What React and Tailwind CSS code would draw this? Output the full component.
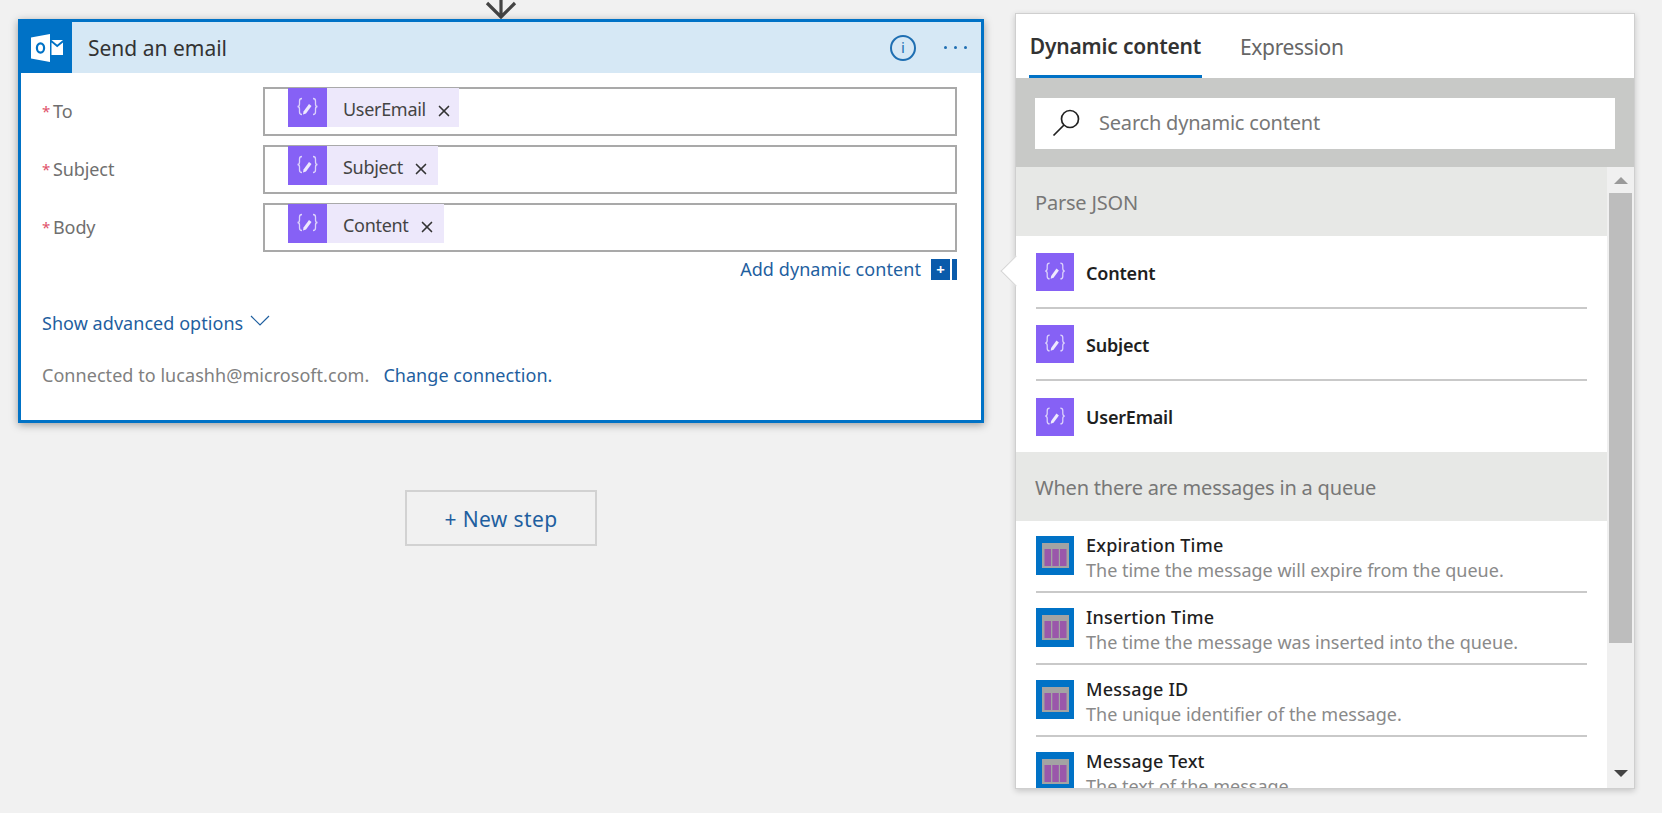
import { X } from "lucide-react";

const font = { fontFamily: '"Noto Sans", "Open Sans", sans-serif' };

function ExpressionIcon({ size = "w-[39px] h-[39px]" }) {
  return (
    <div className={`${size} shrink-0 bg-[#8661f5] flex items-center justify-center`}>
      <svg viewBox="0 0 39 39" className="w-full h-full" fill="none" stroke="#ddd3fb" strokeWidth="1.300">
        <path d="M14 10.500c-2 0-2.500 1-2.500 2.500v3c0 1.500-.7 2.500-2 2.500 1.300 0 2 1 2 2.500v3c0 1.500.5 2.500 2.500 2.500" />
        <path d="M25 10.500c2 0 2.500 1 2.500 2.500v3c0 1.500.7 2.500 2 2.500-1.300 0-2 1-2 2.500v3c0 1.500-.5 2.500-2.500 2.500" />
        <path d="M15.500 23.500l5.500-7.500 2.500 2-5.500 7.500-3 1z" fill="#eee9fd" stroke="none" />
      </svg>
    </div>
  );
}

function QueueIcon() {
  return (
    <svg viewBox="0 0 38 39" className="w-[38px] h-[39px] shrink-0">
      <rect width="38" height="39" fill="#0072c6" />
      <rect x="6" y="7" width="27" height="25" fill="#a3a3a3" />
      <rect x="8.500" y="13" width="6.500" height="17" fill="#9a57aa" />
      <rect x="16.300" y="13" width="6.500" height="17" fill="#9a57aa" />
      <rect x="24" y="13" width="6.500" height="17" fill="#9a57aa" />
    </svg>
  );
}

function OutlookLogo() {
  return (
    <svg viewBox="0 0 32 28" className="w-[32px] h-[28px]">
      <path d="M0 3.500 19 0v28L0 24.500z" fill="#fff" />
      <ellipse cx="9.500" cy="14" rx="3.600" ry="4.600" fill="none" stroke="#0072c6" strokeWidth="2.200" />
      <path d="M20.500 6H32l-5.800 4.800z" fill="#fff" />
      <path d="M20.500 8.500l5.700 4.700 5.800-4.700V21H20.500z" fill="#fff" />
    </svg>
  );
}

function TokenField({ label, token, chipWidth }) {
  return (
    <div className="flex items-start">
      <div className="w-[221px] h-[49px] flex items-center text-[18px] tracking-[-0.1px] text-[#6f6f6f]">
        <span className="text-[#e0516b] text-[15px] w-[11px] -mt-px">*</span>
        {label}
      </div>
      <div className="w-[694px] h-[49px] border-2 border-[#a9a9a9] pl-[23px] bg-white">
        <div className={`${chipWidth} h-[39px] -mt-px flex items-center bg-[#ede8fb]`}>
          <ExpressionIcon />
          <span className="ml-[16px] mt-[3px] text-[18px] tracking-[-0.3px] text-[#444]">{token}</span>
          <X className="w-[18px] h-[18px] ml-[9px] mt-[7px] text-[#333]" strokeWidth={2.2} />
        </div>
      </div>
    </div>
  );
}

function SimpleRow({ title, last }) {
  return (
    <div className={`mx-[20px] flex items-center ${last ? "h-[71px]" : "h-[72px] border-b-2 border-[#c9c9c9]"}`}>
      <ExpressionIcon size="w-[38px] h-[38px]" />
      <span className="ml-[12px] mt-[2px] text-[18px] font-semibold tracking-[-0.2px] text-[#1f1f1f]">{title}</span>
    </div>
  );
}

function QueueRow({ title, desc }) {
  return (
    <div className="mx-[20px] h-[72px] flex items-start pt-[15px] border-b-2 border-[#c9c9c9]">
      <QueueIcon />
      <div className="ml-[12px] -mt-[3px]">
        <div className="text-[18px] leading-[24px] font-medium tracking-[0.2px] text-[#1f1f1f]">{title}</div>
        <div className="mt-[1px] text-[18px] leading-[24px] tracking-[0px] text-[#8a8a8a] whitespace-nowrap">{desc}</div>
      </div>
    </div>
  );
}

function SectionHeader({ children }) {
  return (
    <div className="h-[69px] pl-[19px] pt-[2px] flex items-center bg-[#e7e8e6] text-[20px] tracking-[-0.2px] text-[#777]">
      {children}
    </div>
  );
}

export default function App() {
  return (
    <div style={font} className="h-[813px] overflow-hidden bg-[#f1f1f1] flex items-start pl-[18px]">
      {/* Flow designer column */}
      <div className="w-[966px] flex flex-col items-start">
        <div className="h-[19px] w-full overflow-hidden flex justify-center">
          <svg viewBox="0 0 32 19" className="w-[32px] h-[19px]" fill="none" stroke="#444" strokeWidth="3.200">
            <path d="M16 0v16M2 3l14 14L30 3" />
          </svg>
        </div>

        <div className="w-full h-[404px] border-[3px] border-[#0072c6] bg-white shadow-[0_2px_8px_rgba(0,0,0,0.35)]">
          <div className="h-[51px] flex items-center bg-[#d6e8f5]">
            <div className="w-[51px] h-[51px] bg-[#0072c6] flex items-center justify-center">
              <OutlookLogo />
            </div>
            <span className="ml-[16px] pt-[2px] text-[21px] text-[#333] flex-1">Send an email</span>
            <div className="w-[26px] h-[26px] rounded-full border-2 border-[#1f6fb2] flex items-center justify-center text-[15px] text-[#1f6fb2]">
              i
            </div>
            <div className="ml-[28px] mr-[14px] flex gap-[7px]">
              <span className="w-[3px] h-[3px] rounded-full bg-[#1f6fb2]"></span>
              <span className="w-[3px] h-[3px] rounded-full bg-[#1f6fb2]"></span>
              <span className="w-[3px] h-[3px] rounded-full bg-[#1f6fb2]"></span>
            </div>
          </div>

          <div className="pt-[14px] pl-[21px]">
            <div className="flex flex-col gap-[9px]">
              <TokenField label="To" token="UserEmail" chipWidth="w-[171px]" />
              <TokenField label="Subject" token="Subject" chipWidth="w-[150px]" />
              <TokenField label="Body" token="Content" chipWidth="w-[156px]" />
            </div>

            <div className="w-[915px] mt-[4px] flex items-center justify-end">
              <span className="text-[18px] tracking-[0.07px] text-[#1f5f9f]">Add dynamic content</span>
              <div className="ml-[10px] w-[19px] h-[21px] bg-[#0a5bab] flex items-center justify-center text-white text-[15px] font-bold leading-none">
                +
              </div>
              <div className="ml-[2px] w-[5px] h-[21px] bg-[#0a5bab]"></div>
            </div>

            <div className="mt-[27px] flex items-center text-[18px] tracking-[0.05px] text-[#1f5f9f]">
              Show advanced options
              <svg viewBox="0 0 20 11" className="w-[20px] h-[11px] ml-[7px] -mt-[6px]" fill="none" stroke="#1f5f9f" strokeWidth="1.200">
                <path d="M1 1l9 9 9-9" />
              </svg>
            </div>

            <div className="mt-[25px] text-[18px] tracking-[0.05px] text-[#808080]">
              Connected to lucashh@microsoft.com.
              <span className="ml-[14px] text-[#1f5f9f]">Change connection.</span>
            </div>
          </div>
        </div>

        <div className="self-center mt-[67px] w-[192px] h-[56px] pt-[4px] border-2 border-[#d2d2d2] flex items-center justify-center text-[21px] tracking-[0.4px] text-[#1f5f9f]">
          + New step
        </div>
      </div>

      {/* Dynamic content panel */}
      <div className="relative ml-[31px] mt-[13px] w-[620px] h-[776px] bg-white border border-[#cfcfcf] shadow-[0_2px_6px_rgba(0,0,0,0.18)] flex flex-col">
        <div className="absolute -left-[11px] top-[246px] w-[22px] h-[22px] rotate-45 bg-white border-l border-b border-[#d5d5d5]"></div>

        <div className="relative h-[64px] shrink-0 flex pl-[13px]">
          <div className="h-full w-[173px] pt-[4px] flex items-center justify-center border-b-[3px] border-[#0072c6] text-[21px] font-semibold tracking-[-0.2px] text-[#333]">
            Dynamic content
          </div>
          <div className="ml-[38px] h-full pt-[4px] flex items-center text-[21px] tracking-[-0.35px] text-[#666]">
            Expression
          </div>
        </div>

        <div className="relative h-[89px] shrink-0 bg-[#c8c9c7] px-[19px] pt-[1px] flex items-center">
          <div className="w-full h-[51px] bg-white flex items-center pl-[17px]">
            <svg viewBox="0 0 28 28" className="w-[28px] h-[28px]" fill="none" stroke="#222" strokeWidth="1.700">
              <circle cx="18" cy="10" r="8.500" />
              <path d="M12 16 1.500 26.500" />
            </svg>
            <span className="ml-[19px] text-[20px] tracking-[-0.2px] text-[#777]">Search dynamic content</span>
          </div>
        </div>

        <div className="relative flex-1 min-h-0 flex">
          <div className="flex-1 min-w-0 overflow-hidden">
            <SectionHeader>Parse JSON</SectionHeader>
            <div className="pt-[1px]">
              <SimpleRow title="Content" />
              <SimpleRow title="Subject" />
              <SimpleRow title="UserEmail" last />
            </div>
            <SectionHeader>When there are messages in a queue</SectionHeader>
            <QueueRow title="Expiration Time" desc="The time the message will expire from the queue." />
            <QueueRow title="Insertion Time" desc="The time the message was inserted into the queue." />
            <QueueRow title="Message ID" desc="The unique identifier of the message." />
            <QueueRow title="Message Text" desc="The text of the message." />
          </div>

          <div className="w-[27px] shrink-0 bg-[#f0f0f0] flex flex-col items-center">
            <div className="h-[26px] shrink-0 flex items-center justify-center">
              <div className="w-0 h-0 border-x-[7px] border-x-transparent border-b-[7px] border-b-[#9a9a9a]"></div>
            </div>
            <div className="w-[23px] h-[450px] bg-[#bdbdbd]"></div>
            <div className="mt-auto h-[30px] shrink-0 flex items-center justify-center">
              <div className="w-0 h-0 border-x-[7px] border-x-transparent border-t-[7px] border-t-[#444]"></div>
            </div>
          </div>
        </div>
      </div>
    </div>
  );
}
